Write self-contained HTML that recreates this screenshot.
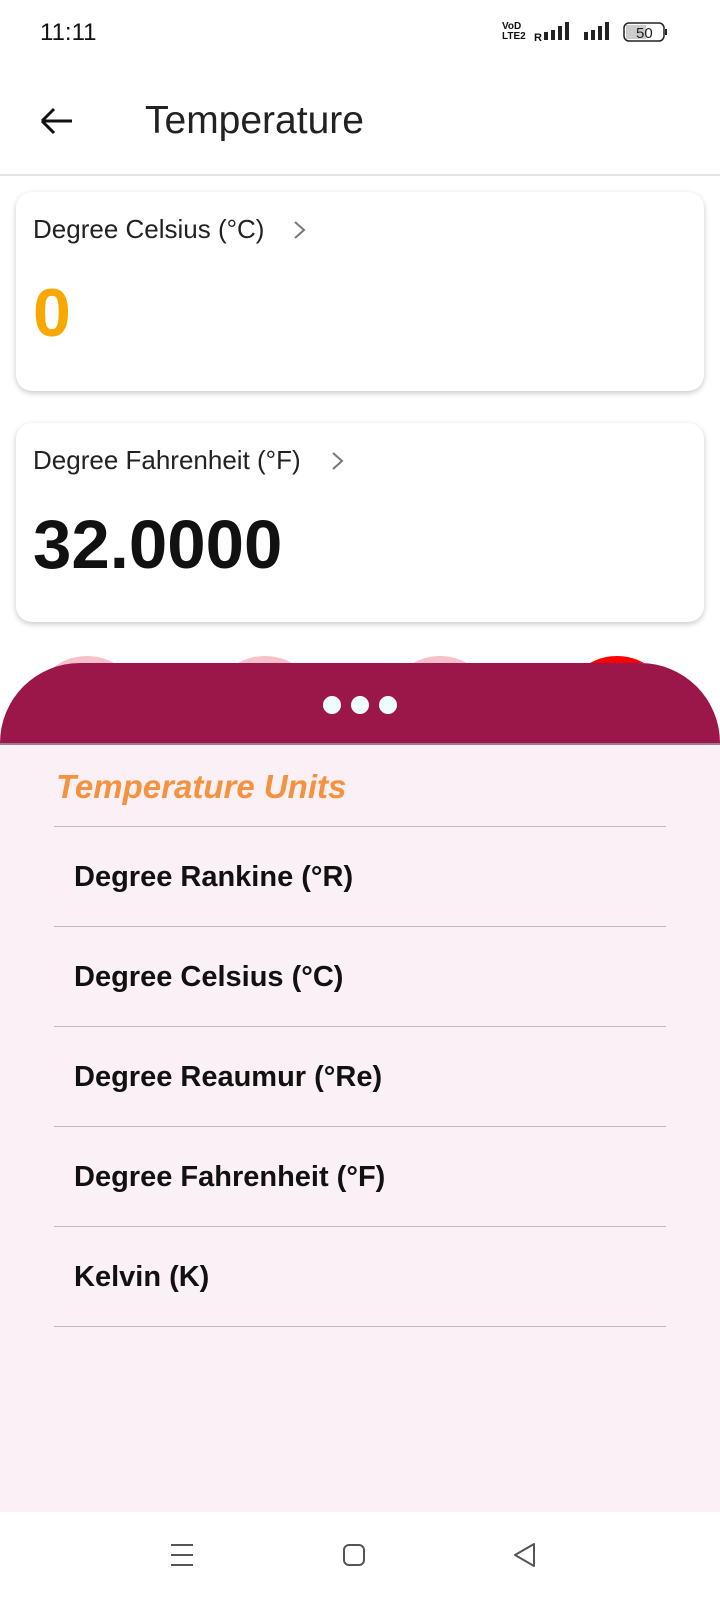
<!DOCTYPE html>
<html><head><meta charset="utf-8"><style>
*{margin:0;padding:0;box-sizing:border-box}
body{width:720px;height:1600px;position:relative;background:#fff;font-family:"Liberation Sans",Roboto,sans-serif;overflow:hidden;color:#111}
.abs{position:absolute}
.card{position:absolute;left:16px;width:688px;background:#fff;border-radius:16px;box-shadow:0 2px 6px rgba(0,0,0,.22)}
.lbl{position:absolute;left:17px;font-size:26px;color:#222}
.item{position:absolute;left:74px;font-size:29px;font-weight:bold;color:#111}
.div{position:absolute;left:54px;width:612px;height:1px;background:#bbb}
.pb{position:absolute;top:656px;width:110px;height:110px;border-radius:55px;background:#f8c0c8}
</style></head><body>
<div class="abs" style="left:40px;top:19px;font-size:24px;color:#111">11:11</div>
<div class="abs" style="left:502px;top:22px;font-size:10px;font-weight:bold;line-height:10px">VoD<br>LTE2</div>
<div class="abs" style="left:534px;top:32px;font-size:11px;font-weight:bold">R</div>
<svg class="abs" style="left:544px;top:20px" width="125" height="24">
<rect x="0" y="12" width="4" height="8" fill="#222"/><rect x="7" y="10" width="4" height="10" fill="#222"/><rect x="14" y="6" width="4" height="14" fill="#222"/><rect x="21" y="2" width="4" height="18" fill="#222"/>
<rect x="40" y="12" width="4" height="8" fill="#222"/><rect x="47" y="10" width="4" height="10" fill="#222"/><rect x="54" y="6" width="4" height="14" fill="#222"/><rect x="61" y="2" width="4" height="18" fill="#222"/>
<rect x="80" y="3" width="40" height="18" rx="5" fill="none" stroke="#222" stroke-width="1.5"/><rect x="82" y="5" width="20" height="14" fill="#ccc"/><rect x="121" y="9" width="2" height="6" fill="#222"/>
<text x="92" y="18" font-size="15" font-family="Liberation Sans" fill="#222">50</text></svg>
<svg class="abs" style="left:38px;top:105px" width="36" height="32"><path d="M4 16H34M4 16L16 4M4 16L16 28" stroke="#111" stroke-width="3" fill="none"/></svg>
<div class="abs" style="left:145px;top:99px;font-size:39px;color:#222">Temperature</div>
<div class="abs" style="left:0;top:174px;width:720px;height:2px;background:#e4e4e4"></div>

<div class="card" style="top:192px;height:199px">
<div class="lbl" style="top:22px">Degree Celsius (°C)</div>
<svg class="abs" style="left:276px;top:28px" width="16" height="20"><path d="M3 2L12 10L3 18" stroke="#777" stroke-width="2" fill="none"/></svg>
<div class="abs" style="left:17px;top:82px;font-size:68px;font-weight:bold;color:#f8a800">0</div></div>
<div class="card" style="top:423px;height:199px">
<div class="lbl" style="top:22px">Degree Fahrenheit (°F)</div>
<svg class="abs" style="left:314px;top:28px" width="16" height="20"><path d="M3 2L12 10L3 18" stroke="#777" stroke-width="2" fill="none"/></svg>
<div class="abs" style="left:17px;top:82px;font-size:69px;font-weight:bold;color:#111">32.0000</div></div>

<div class="pb" style="left:32px"></div><div class="pb" style="left:210px"></div><div class="pb" style="left:385px"></div><div class="pb" style="left:562px;background:#f00"></div>

<div class="abs" style="left:0;top:663px;width:720px;height:850px;background:#fbf0f5;border-radius:80px 80px 0 0;overflow:hidden">
<div style="height:82px;background:#9b1749;border-bottom:2px solid #a07890"></div></div>
<div class="abs" style="left:323px;top:696px;width:18px;height:18px;border-radius:9px;background:#effcff"></div>
<div class="abs" style="left:351px;top:696px;width:18px;height:18px;border-radius:9px;background:#effcff"></div>
<div class="abs" style="left:379px;top:696px;width:18px;height:18px;border-radius:9px;background:#effcff"></div>
<div class="abs" style="left:56px;top:768px;font-size:33px;font-weight:bold;font-style:italic;color:#f4923f">Temperature Units</div>
<div class="div" style="top:826px"></div>
<div class="item" style="top:861px">Degree Rankine (°R)</div><div class="div" style="top:926px"></div>
<div class="item" style="top:961px">Degree Celsius (°C)</div><div class="div" style="top:1026px"></div>
<div class="item" style="top:1061px">Degree Reaumur (°Re)</div><div class="div" style="top:1126px"></div>
<div class="item" style="top:1161px">Degree Fahrenheit (°F)</div><div class="div" style="top:1226px"></div>
<div class="item" style="top:1261px">Kelvin (K)</div><div class="div" style="top:1326px"></div>

<div class="abs" style="left:0;top:1512px;width:720px;height:88px;background:#fff"></div>
<svg class="abs" style="left:170px;top:1542px" width="24" height="26"><path d="M1 3H23M1 13H23M1 23H23" stroke="#555" stroke-width="2"/></svg>
<svg class="abs" style="left:342px;top:1543px" width="24" height="24"><rect x="2" y="2" width="20" height="20" rx="5" fill="none" stroke="#555" stroke-width="2"/></svg>
<svg class="abs" style="left:513px;top:1542px" width="24" height="26"><path d="M21 2V24L2 13Z" fill="none" stroke="#555" stroke-width="2" stroke-linejoin="round"/></svg>
</body></html>
